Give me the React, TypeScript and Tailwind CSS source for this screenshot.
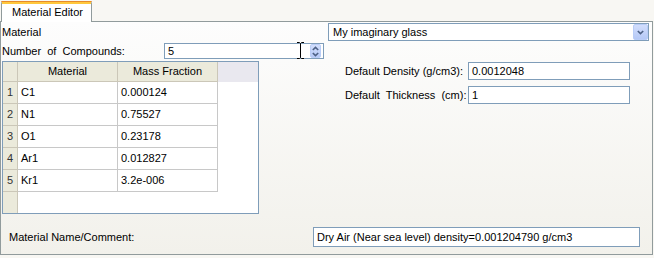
import React from 'react';

const rows = [
    { name: "C1", fraction: "0.000124" },
    { name: "N1", fraction: "0.75527" },
    { name: "O1", fraction: "0.23178" },
    { name: "Ar1", fraction: "0.012827" },
    { name: "Kr1", fraction: "3.2e-006" },
];

const Chevron = ({ up = false }: { up?: boolean }) => (
    <svg width="7" height="5" viewBox="0 0 7 5" className={up ? "rotate-180" : ""}>
        <path d="M0.8 1 L3.5 3.6 L6.2 1" fill="none" stroke="#4d6185" strokeWidth="1.6" />
    </svg>
);

const Field = ({ value, className }: { value: string; className: string }) => (
    <div className={`bg-white border border-[#7f9db9] flex items-center pl-[3px] ${className}`}>{value}</div>
);

const App = () => {
    return (
        <div className="w-[654px] h-[258px] bg-[#f8f7f3] text-[11px] leading-none text-black font-['Liberation_Sans',Arial,sans-serif] overflow-hidden">
            {/* tab strip */}
            <div className="h-[21px] flex pl-[1px]">
                <div className="relative z-10 mt-[1px] w-[91px] h-[21px] bg-white border-x border-[#919b9c] rounded-t-[3px] flex flex-col">
                    <div className="h-[1px] bg-[#e68b2c] rounded-t-[3px] -mx-px" />
                    <div className="h-[2px] bg-[#ffc83c]" />
                    <div className="flex-1 flex items-center pl-[10px] pb-[2px]">Material Editor</div>
                </div>
            </div>

            {/* panel */}
            <div className="w-[653px] h-[234px] border border-[#919b9c] bg-gradient-to-b from-[#fdfdfd] to-[#f2f1eb] flex flex-col">
                <div className="flex items-center mt-[1px] h-[18px] pl-[1px]">
                    <span>Material</span>
                    <div className="ml-auto mr-[3px] w-[321px] h-[18px] bg-white border border-[#7f9db9] flex items-center">
                        <span className="pl-[4px] flex-1">My imaginary glass</span>
                        <div className="w-[15px] h-[16px] bg-gradient-to-b from-[#d2defc] to-[#b5c9f6] border border-[#b9cdf7] rounded-[2px] flex items-center justify-center">
                            <Chevron />
                        </div>
                    </div>
                </div>

                <div className="flex items-center mt-[2px] h-[16px] pl-[1px]">
                    <span className="w-[162px] whitespace-pre">Number  of  Compounds:</span>
                    <div className="relative w-[160px] h-[16px] bg-white border border-[#7f9db9] flex items-center">
                        <span className="pl-[3px] flex-1">5</span>
                        <div className="w-[11px] h-[14px] mr-[2px] bg-gradient-to-b from-[#d2defc] to-[#b5c9f6] border border-[#b9cdf7] rounded-[2px] flex flex-col items-center justify-center gap-[1px]">
                            <Chevron up />
                            <Chevron />
                        </div>
                        <svg className="absolute left-[132px] top-[-2px]" width="7" height="17" viewBox="0 0 7 17">
                            <path d="M0 0.5 H2.5 L3.5 1.5 L4.5 0.5 H7 M3.5 1.5 V15.5 M0 16.5 H2.5 L3.5 15.5 L4.5 16.5 H7" fill="none" stroke="#000" strokeWidth="1" />
                        </svg>
                    </div>
                </div>

                <div className="flex mt-[2px]">
                    <div className="ml-[1px] w-[257px] h-[153px] border border-[#7f9db9] bg-white flex flex-col">
                        <div className="flex h-[20px] shrink-0">
                            <div className="w-[15px] bg-[#ebeadb] border-r border-b border-[#cbc7b8]" />
                            <div className="w-[100px] bg-[#ebeadb] border-r border-b border-[#cbc7b8] flex items-center justify-center">Material</div>
                            <div className="w-[100px] bg-[#ebeadb] border-r border-b border-[#cbc7b8] flex items-center justify-center">Mass Fraction</div>
                            <div className="flex-1 bg-[#e9e8ef]" />
                        </div>
                        {rows.map((item, index) => (
                            <div key={index} className="flex h-[22px] shrink-0">
                                <div className="w-[15px] bg-[#ebeadb] border-r border-b border-[#cbc7b8] flex items-center justify-center text-[#333]">{index + 1}</div>
                                <div className="w-[100px] border-r border-b border-[#c8c8c8] flex items-center pl-[3px]">{item.name}</div>
                                <div className="w-[100px] border-r border-b border-[#c8c8c8] flex items-center pl-[3px]">{item.fraction}</div>
                            </div>
                        ))}
                        <div className="flex flex-1">
                            <div className="w-[15px] bg-[#ebeadb] border-r border-[#cbc7b8]" />
                        </div>
                    </div>

                    <div className="ml-[86px] flex flex-col">
                        <div className="flex items-center mt-[1px] h-[18px]">
                            <span className="w-[123px]">Default Density (g/cm3):</span>
                            <Field value="0.0012048" className="w-[162px] h-[18px]" />
                        </div>
                        <div className="flex items-center mt-[6px] h-[18px]">
                            <span className="w-[123px] whitespace-pre">Default  Thickness  (cm):</span>
                            <Field value="1" className="w-[162px] h-[18px]" />
                        </div>
                    </div>
                </div>

                <div className="flex items-center mt-[13px] h-[20px] pl-[8px]">
                    <span className="w-[304px]">Material Name/Comment:</span>
                    <Field value="Dry Air (Near sea level) density=0.001204790 g/cm3" className="w-[327px] h-[20px]" />
                </div>
            </div>
        </div>
    );
};

export default App;
